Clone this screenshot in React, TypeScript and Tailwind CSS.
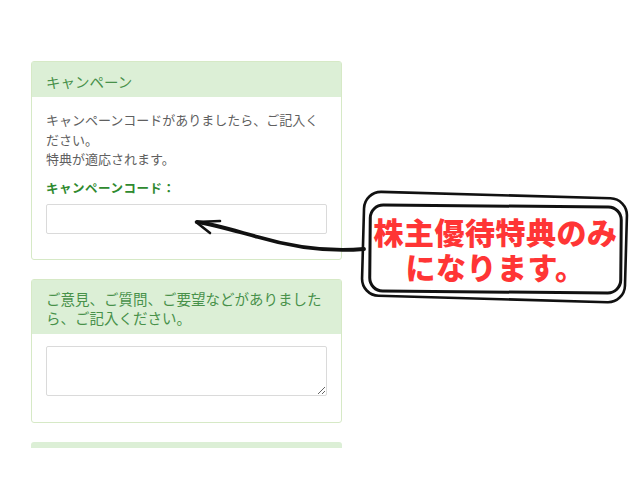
import React from 'react';

const jp = { fontFamily: '"Noto Sans CJK JP", "Noto Sans", sans-serif' };

const Panel: React.FC<{ title: React.ReactNode; children: React.ReactNode }> = ({ title, children }) => (
  <div className="w-[311px] border border-[#d6e9c6] rounded-[3px] bg-white">
    <div className="bg-[#dcefd6] px-[14px] text-[14.5px] leading-[19px] text-[#48914a]">{title}</div>
    {children}
  </div>
);

export default function App() {
  return (
    <div className="relative w-[640px] h-[480px] bg-white overflow-hidden" style={jp}>
      <div className="flex flex-col gap-[19px] pt-[61px] pl-[31px]">
        <Panel title={<div className="pt-[10px] pb-[6px]">キャンペーン</div>}>
          <div className="px-[14px] pt-[13px] pb-[25px]">
            <p className="text-[13px] leading-[19.5px] text-[#606060]">
              キャンペーンコードがありましたら、ご記入く
              <br />
              ださい。
              <br />
              特典が適応されます。
            </p>
            <label className="block mt-[9px] text-[12.5px] leading-[20px] font-bold text-[#2f8a2f] tracking-[0.5px]">
              キャンペーンコード：
            </label>
            <input
              type="text"
              className="block mt-[6px] w-full h-[30px] border border-[#dadada] rounded-[2px] bg-white"
            />
          </div>
        </Panel>

        <Panel
          title={
            <div className="pt-[9px] pb-[7px]">
              ご意見、ご質問、ご要望などがありました
              <br />
              ら、ご記入ください。
            </div>
          }
        >
          <div className="px-[14px] pt-[12px] pb-[26px]">
            <textarea className="block w-full h-[50px] border border-[#dadada] rounded-[2px] bg-white" />
          </div>
        </Panel>

        <div className="w-[311px] h-[6px] bg-[#dcefd6] rounded-t-[3px]" />
      </div>

      {/* annotation overlay */}
      <svg className="absolute inset-0 pointer-events-none" width="640" height="480" viewBox="0 0 640 480">
        <g fill="white" stroke="#111" strokeLinejoin="round" strokeLinecap="round">
          <rect x="363" y="195" width="263" height="104" rx="17" strokeWidth="2.6" transform="rotate(1.6 494 247)" />
          <rect x="370" y="206" width="251" height="86" rx="13" strokeWidth="3" transform="rotate(0.5 495 249)" />
        </g>
        <g fill="none" stroke="#111" strokeLinecap="round" strokeLinejoin="round">
          <path d="M364,249 C330,252 292,247 258,237 C232,230 212,224 197,222" strokeWidth="3.8" />
          <path d="M220,221 L196,222 L210,233" strokeWidth="2.6" />
        </g>
      </svg>
      <div className="absolute left-[370px] top-[214px] w-[251px] flex flex-col items-center text-[30px] font-black text-[#ff3535] tracking-[0.5px] whitespace-nowrap">
        <span className="block h-[35px] leading-[35px]">株主優待特典のみ</span>
        <span className="block h-[35px] leading-[35px]">になります。</span>
      </div>
    </div>
  );
}
